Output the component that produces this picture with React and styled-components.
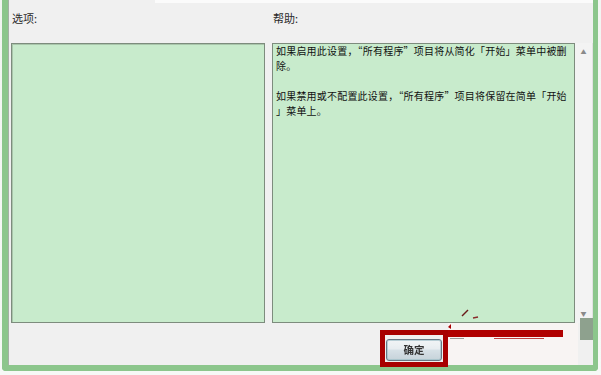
import React from "react";
import styled, { createGlobalStyle } from "styled-components";

const GlobalStyle = createGlobalStyle`
  html, body { margin: 0; padding: 0; background: #eef2ee; }
  * { box-sizing: border-box; }
`;

const Screen = styled.div`
  position: relative;
  width: 601px;
  height: 375px;
  overflow: hidden;
  background: linear-gradient(#f2f5f2, #f6f9f6);
  font-family: "Noto Sans CJK SC", "Noto Sans", sans-serif;
  color: #1c1c1c;
`;

const Window = styled.div`
  margin-left: 2px;
  width: 596px;
  height: 371px;
  border-left: 6px solid #8cc68c;
  border-right: 5px solid #8cc68c;
  border-bottom: 6px solid #8cc68c;
  border-bottom-left-radius: 4px;
  border-bottom-right-radius: 4px;
  box-shadow: inset 0 -1px 0 #6fae6f;
`;

const Content = styled.div`
  height: 100%;
  background: #f0f0f0;
  border-left: 1px solid #a4b0a4;
  padding-left: 2px;
  display: grid;
  grid-template-columns: 254px 321px;
  grid-template-rows: 43px 280px 1fr;
  column-gap: 7px;
  position: relative;
`;

const TopEdge = styled.div`
  position: absolute;
  top: 0;
  left: 146px;
  right: 0;
  height: 3px;
  background: #fbfbfb;
`;

const Label = styled.div`
  padding-top: 11px;
  padding-left: ${(p) => p.$indent || 1}px;
  font-size: 11px;
  line-height: 14px;
  color: #2a2a2a;
`;

const OptionsBox = styled.div`
  background: #c8ebcc;
  border: 1px solid #7d8c7d;
  box-shadow: inset 1px 1px 0 #a9c6ab;
`;

const HelpPanel = styled.div`
  display: flex;
`;

const HelpBox = styled.div`
  flex: 0 0 303px;
  background: #c8ebcc;
  border: 1px solid #7d8c7d;
  padding: 0 3px;
  font-size: 10px;
  letter-spacing: 0.2px;
  line-height: 15px;
  color: #121212;
  white-space: nowrap;
  overflow: hidden;
`;

const HelpLine = styled.div`
  height: 15px;
  margin-top: ${(p) => (p.$first ? "-1px" : "0")};
`;

const ScrollBar = styled.div`
  flex: 1;
  background: #f3f3f3;
  border-right: 1px solid #e2e2e2;
  display: flex;
  flex-direction: column;
  justify-content: space-between;
  align-items: center;
  padding: 5px 0 5px 0;
  font-size: 6px;
  color: #8a8a8a;
  line-height: 8px;
`;

const BottomRow = styled.div`
  grid-column: 1 / span 2;
  display: flex;
  align-items: flex-start;
  padding-left: 369px;
  padding-top: 7px;
`;

const RedFrame = styled.div`
  border: 5px solid #a80000;
  padding: 0 1px 1px 1px;
`;

const Button = styled.button`
  width: 56px;
  height: 22px;
  padding: 0;
  border: 1px solid #3c7fb1;
  border-radius: 3px;
  background: linear-gradient(#eaf6fd 0%, #d9f0fc 45%, #bee6fd 50%, #a7d9f5 100%);
  box-shadow: inset 0 0 0 1px #48d0f8aa;
  font-family: "Noto Sans CJK SC", sans-serif;
  font-size: 10.5px;
  font-weight: 700;
  color: #333;
  filter: saturate(0.25);
`;

const Annotation = styled.div`
  margin-top: -7px;
  width: 130px;
  height: 42px;
  background: #f8f4f3;
  display: flex;
  flex-direction: column;
  padding-top: 7px;
`;

const RedBar = styled.div`
  width: 115px;
  height: 7px;
  background: #b00000;
`;

const ThinLines = styled.div`
  display: flex;
  gap: 30px;
  margin-top: 1px;
  padding-left: 2px;
`;

const Thin = styled.div`
  width: ${(p) => p.$w}px;
  height: 1px;
  background: ${(p) => p.$c};
`;

const GreyBlock = styled.div`
  position: absolute;
  left: 580px;
  top: 318px;
  width: 13px;
  height: 22px;
  background: #8ea18e;
`;

const ArrowMarks = styled.svg`
  position: absolute;
  left: 440px;
  top: 300px;
`;

export default function App() {
  return (
    <Screen>
      <GlobalStyle />
      <Window>
        <Content>
          <TopEdge />
          <Label $indent={1}>选项:</Label>
          <Label $indent={0}>帮助:</Label>
          <OptionsBox />
          <HelpPanel>
            <HelpBox lang="zh-CN">
              <HelpLine $first>如果启用此设置，“所有程序”项目将从简化「开始」菜单中被删</HelpLine>
              <HelpLine>除。</HelpLine>
              <HelpLine />
              <HelpLine>如果禁用或不配置此设置，“所有程序”项目将保留在简单「开始</HelpLine>
              <HelpLine>」菜单上。</HelpLine>
            </HelpBox>
            <ScrollBar>
              <span>▲</span>
              <span>▼</span>
            </ScrollBar>
          </HelpPanel>
          <BottomRow>
            <RedFrame>
              <Button>确定</Button>
            </RedFrame>
            <Annotation>
              <RedBar />
              <ThinLines>
                <Thin $w={14} $c="#9a9a9a" />
                <Thin $w={50} $c="#c04040" />
              </ThinLines>
            </Annotation>
          </BottomRow>
        </Content>
      </Window>
      <GreyBlock />
      <ArrowMarks width="50" height="32" viewBox="0 0 50 32">
        <path d="M22 16 L28 10" stroke="#6a1a1a" strokeWidth="1.5" />
        <path d="M33 18 L38 17" stroke="#8a2a2a" strokeWidth="1.5" />
        <path d="M8 27 L11 24 L11 29 Z" fill="#a80000" />
      </ArrowMarks>
    </Screen>
  );
}
